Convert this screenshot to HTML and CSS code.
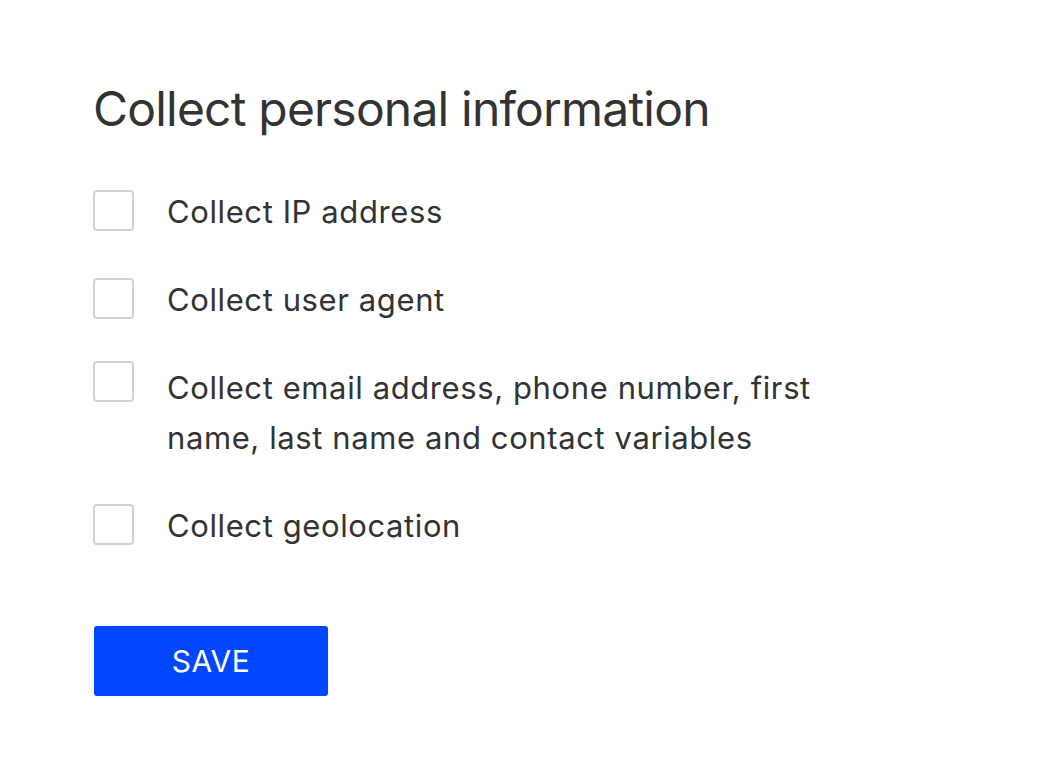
FILE: index.html
```html
<!DOCTYPE html>
<html lang="en">
<head>
    <meta charset="UTF-8">
    <meta name="viewport" content="width=device-width, initial-scale=1.0">
    <title>Collect personal information</title>
    <link rel="stylesheet" href="styles.css">
</head>
<body>
    <div class="container">
        <h1>Collect personal information</h1>

        <form id="privacyForm">
            <ul class="options">
                <li class="option">
                    <input type="checkbox" id="collectIp" class="check">
                    <label for="collectIp">Collect IP address</label>
                </li>
                <li class="option">
                    <input type="checkbox" id="collectAgent" class="check">
                    <label for="collectAgent">Collect user agent</label>
                </li>
                <li class="option multi">
                    <input type="checkbox" id="collectContact" class="check">
                    <label for="collectContact">Collect email address, phone number, first name, last name and contact variables</label>
                </li>
                <li class="option">
                    <input type="checkbox" id="collectGeo" class="check">
                    <label for="collectGeo">Collect geolocation</label>
                </li>
            </ul>
            <button type="submit" class="save">SAVE</button>
        </form>
    </div>
</body>
</html>
```

FILE: styles.css
```css
body {
    margin: 0;
    background: #ffffff;
    font-family: Inter, 'Noto Sans', sans-serif;
    color: #333333;
}
.container {
    padding: 80px 0 0 93px;
}
h1 {
    margin: 0 0 49px;
    font-size: 48px;
    font-weight: 400;
    line-height: 58px;
    letter-spacing: -0.8px;
    color: #333333;
}
.options {
    list-style: none;
    margin: 0;
    padding: 0;
}
.option {
    display: flex;
    align-items: flex-start;
    margin-bottom: 38px;
}
.option:last-child {
    margin-bottom: 0;
}
.check {
    appearance: none;
    -webkit-appearance: none;
    flex: none;
    width: 41px;
    height: 41px;
    margin: 3px 33px 0 0;
    border: 2px solid #d2d2d2;
    border-radius: 4px;
    background: #ffffff;
    cursor: pointer;
}
.multi .check {
    margin-top: -2px;
}
.option label {
    max-width: 670px;
    font-size: 31px;
    line-height: 50px;
    letter-spacing: 0.6px;
    cursor: pointer;
}
.save {
    display: block;
    width: 234px;
    height: 70px;
    margin: 75px 0 0 1px;
    padding: 0;
    border: none;
    border-radius: 3px;
    background: #0047ff;
    color: #ffffff;
    font-family: Inter, 'Noto Sans', sans-serif;
    font-size: 30px;
    letter-spacing: 0.5px;
    cursor: pointer;
}
```
